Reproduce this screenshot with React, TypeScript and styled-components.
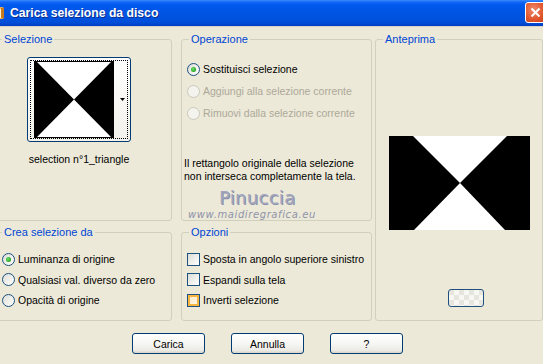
import React from "react";
import styled, { createGlobalStyle } from "styled-components";

const GlobalStyle = createGlobalStyle`
  html, body {
    margin: 0;
    padding: 0;
    background: #ece9d8;
  }
  body {
    font-family: "Liberation Sans", Arial, sans-serif;
    font-size: 10.5px;
    color: #000;
  }
`;

const Window = styled.div`
  width: 543px;
  height: 364px;
  overflow: hidden;
  background: #ece9d8;
`;

const TitleBar = styled.div`
  height: 26px;
  display: flex;
  align-items: center;
  background: linear-gradient(
    to bottom,
    #3d8cff 0px,
    #1468f6 2px,
    #0058ee 5px,
    #0054e3 50%,
    #004fda 85%,
    #003fc5 100%
  );
  border-bottom: 1px solid #d8d4c4;
`;

const TitleIcon = styled.svg`
  margin-left: -10px;
  margin-right: 4px;
  flex: none;
`;

const TitleText = styled.div`
  flex: 1;
  font-family: "Liberation Sans", Arial, sans-serif;
  font-weight: bold;
  font-size: 12.2px;
  color: #fff;
  text-shadow: 1px 1px 0 #0c2d8c;
`;

const CloseButton = styled.div`
  width: 21px;
  height: 21px;
  box-sizing: border-box;
  margin-right: -3px;
  margin-top: -2px;
  border: 1px solid #fff;
  border-radius: 3px;
  background: radial-gradient(circle at 40% 35%, #f08b6c 0%, #e2582f 55%, #c8421c 100%);
  display: flex;
  align-items: center;
  justify-content: center;
`;

const Body = styled.div`
  padding-top: 6px;
`;

const Panels = styled.div`
  display: flex;
  margin-left: -6px;
`;

const LeftGrid = styled.div`
  display: grid;
  grid-template-columns: 178px 191px;
  grid-template-rows: 188px 95px;
  column-gap: 9px;
  row-gap: 5px;
  margin-right: 3px;
`;

const Group = styled.fieldset<{ $w?: number; $h?: number }>`
  box-sizing: border-box;
  margin: 0;
  padding: 0;
  min-width: 0;
  width: ${(p) => (p.$w ? `${p.$w}px` : "auto")};
  height: ${(p) => (p.$h ? `${p.$h}px` : "auto")};
  border: 1px solid #d0d0bf;
  border-radius: 3px;
  display: flex;
  flex-direction: column;
`;

const Legend = styled.legend`
  margin-left: 7px;
  padding: 0 2px;
  font-size: 11px;
  line-height: 13px;
  color: #0046d5;
`;

const ThumbColumn = styled.div`
  width: 104px;
  margin: 11px 0 0 32px;
  display: flex;
  flex-direction: column;
  align-items: center;
`;

const Thumb = styled.div`
  box-sizing: border-box;
  width: 104px;
  height: 85px;
  border: 1px solid #003c74;
  border-radius: 3px;
  background: linear-gradient(to bottom, #ffffff, #f2f1ea);
  padding: 2px;
`;

const FocusRect = styled.div`
  box-sizing: border-box;
  height: 100%;
  border: 1px dotted #000;
  display: flex;
  align-items: center;
  padding: 1px 0 1px 3px;
`;

const ArrowSlot = styled.div`
  flex: 1;
  display: flex;
  align-items: center;
  justify-content: center;
  padding-left: 4px;
`;

const Caption = styled.div`
  margin-top: 11px;
  line-height: 13px;
  white-space: nowrap;
`;

const OptionList = styled.div<{ $top: number; $left: number; $row: number }>`
  margin-top: ${(p) => p.$top}px;
  padding-left: ${(p) => p.$left}px;
  display: flex;
  flex-direction: column;
  & > * {
    height: ${(p) => p.$row}px;
  }
`;

const Option = styled.label<{ $disabled?: boolean }>`
  display: flex;
  align-items: center;
  gap: 3px;
  white-space: nowrap;
  color: ${(p) => (p.$disabled ? "#aca899" : "#000")};
`;

const RadioMark = styled.span<{ $checked?: boolean; $disabled?: boolean }>`
  box-sizing: border-box;
  width: 13px;
  height: 13px;
  flex: none;
  border-radius: 50%;
  border: 1px solid ${(p) => (p.$disabled ? "#cac8bb" : "#1c5180")};
  background: ${(p) =>
    p.$disabled
      ? "#f4f3ee"
      : "linear-gradient(135deg, #dcdcd7 0%, #f2f2ee 60%, #ffffff 100%)"};
  display: flex;
  align-items: center;
  justify-content: center;
  &::after {
    content: "";
    display: ${(p) => (p.$checked ? "block" : "none")};
    width: 5px;
    height: 5px;
    border-radius: 50%;
    background: radial-gradient(circle at 40% 40%, #6ee26a 0%, #2fae2b 60%, #1f8f1c 100%);
  }
`;

const CheckMark = styled.span<{ $hover?: boolean }>`
  box-sizing: border-box;
  width: 13px;
  height: 13px;
  flex: none;
  border: 1px solid #1c5180;
  background: ${(p) =>
    p.$hover
      ? "linear-gradient(135deg, #fbe7c0, #fffaf0)"
      : "linear-gradient(135deg, #dcdcd7 0%, #f2f2ee 60%, #ffffff 100%)"};
  box-shadow: ${(p) => (p.$hover ? "inset 0 0 0 2px #f8b640" : "none")};
`;

const Note = styled.div`
  margin-top: 33px;
  padding-left: 2px;
  line-height: 12.5px;
`;

const Watermark = styled.div`
  margin-top: 6px;
  display: flex;
  flex-direction: column;
`;

const WatermarkName = styled.div`
  margin-left: 37px;
  font-family: "DejaVu Sans", Verdana, sans-serif;
  font-size: 18px;
  line-height: 20px;
  letter-spacing: 0.3px;
  color: #a1a5bd;
  text-shadow: 1px 1px 0 #8a8ea8;
`;

const WatermarkSite = styled.div`
  margin-left: 6px;
  font-family: "DejaVu Sans", Verdana, sans-serif;
  font-style: italic;
  font-size: 10px;
  line-height: 13px;
  letter-spacing: 0.6px;
  color: #8f93a9;
`;

const Preview = styled.svg`
  display: block;
  margin: 90px auto 0;
`;

const SmallButton = styled.div`
  box-sizing: border-box;
  width: 36px;
  height: 18px;
  margin: 59px 0 0 72px;
  border: 1px solid #1f4f7f;
  border-radius: 3px;
  background: repeating-conic-gradient(#f7f7f3 0 25%, #e6e6df 0 50%) 0 0 / 10px 10px;
`;

const ButtonRow = styled.div`
  display: flex;
  gap: 26px;
  padding-left: 132px;
  margin-top: 12px;
`;

const PushButton = styled.button`
  box-sizing: border-box;
  width: 73px;
  height: 21px;
  padding: 0;
  border: 1px solid #003c74;
  border-radius: 3px;
  background: linear-gradient(to bottom, #ffffff 0%, #f6f6f3 50%, #ecebe6 85%, #d8d4c8 100%);
  font-family: "Liberation Sans", Arial, sans-serif;
  font-size: 10.5px;
  color: #000;
`;

const Hourglass = ({ w, h, inset }: { w: number; h: number; inset: number }) => (
  <>
    <rect x="0" y="0" width={w} height={h} fill="#000" />
    <polygon points={`${inset},1 ${w - inset},1 ${w / 2},${h / 2}`} fill="#fff" />
    <polygon points={`${inset},${h - 1} ${w - inset},${h - 1} ${w / 2},${h / 2}`} fill="#fff" />
  </>
);

export default function App() {
  return (
    <Window>
      <GlobalStyle />
      <TitleBar>
        <TitleIcon width="16" height="16" viewBox="0 0 16 16">
          <rect x="2" y="2" width="12" height="12" rx="2" fill="#f0b050" />
          <rect x="5" y="4" width="9" height="9" fill="#fff4d8" />
          <rect x="11" y="3" width="3" height="10" fill="#c97a1c" />
        </TitleIcon>
        <TitleText>Carica selezione da disco</TitleText>
        <CloseButton>
          <svg width="11" height="11" viewBox="0 0 11 11">
            <path d="M1.5 1.5 L9.5 9.5 M9.5 1.5 L1.5 9.5" stroke="#fff" strokeWidth="2" />
          </svg>
        </CloseButton>
      </TitleBar>
      <Body>
        <Panels>
          <LeftGrid>
            <Group>
              <Legend>Selezione</Legend>
              <ThumbColumn>
                <Thumb>
                  <FocusRect>
                    <svg width="80" height="77" viewBox="0 0 80 77">
                      <Hourglass w={80} h={77} inset={3} />
                    </svg>
                    <ArrowSlot>
                      <svg width="5" height="3" viewBox="0 0 5 3">
                        <polygon points="0,0 5,0 2.5,3" fill="#000" />
                      </svg>
                    </ArrowSlot>
                  </FocusRect>
                </Thumb>
                <Caption>selection n°1_triangle</Caption>
              </ThumbColumn>
            </Group>
            <Group>
              <Legend>Operazione</Legend>
              <OptionList $top={12} $left={5} $row={22}>
                <Option>
                  <RadioMark $checked />
                  Sostituisci selezione
                </Option>
                <Option $disabled>
                  <RadioMark $disabled />
                  Aggiungi alla selezione corrente
                </Option>
                <Option $disabled>
                  <RadioMark $disabled />
                  Rimuovi dalla selezione corrente
                </Option>
              </OptionList>
              <Note>
                Il rettangolo originale della selezione
                <br />
                non interseca completamente la tela.
              </Note>
              <Watermark>
                <WatermarkName>Pinuccia</WatermarkName>
                <WatermarkSite>www.maidiregrafica.eu</WatermarkSite>
              </Watermark>
            </Group>
            <Group>
              <Legend>Crea selezione da</Legend>
              <OptionList $top={10} $left={7} $row={20.5}>
                <Option>
                  <RadioMark $checked />
                  Luminanza di origine
                </Option>
                <Option>
                  <RadioMark />
                  Qualsiasi val. diverso da zero
                </Option>
                <Option>
                  <RadioMark />
                  Opacità di origine
                </Option>
              </OptionList>
            </Group>
            <Group>
              <Legend>Opzioni</Legend>
              <OptionList $top={10} $left={5} $row={20.5}>
                <Option>
                  <CheckMark />
                  Sposta in angolo superiore sinistro
                </Option>
                <Option>
                  <CheckMark />
                  Espandi sulla tela
                </Option>
                <Option>
                  <CheckMark $hover />
                  Inverti selezione
                </Option>
              </OptionList>
            </Group>
          </LeftGrid>
          <Group $w={168} $h={288}>
            <Legend>Anteprima</Legend>
            <Preview width="141" height="94" viewBox="0 0 141 94">
              <rect x="0" y="0" width="141" height="94" fill="#000" />
              <polygon points="24,0 118,0 71,47" fill="#fff" />
              <polygon points="25,94 116,94 71,47" fill="#fff" />
            </Preview>
            <SmallButton />
          </Group>
        </Panels>
        <ButtonRow>
          <PushButton>Carica</PushButton>
          <PushButton>Annulla</PushButton>
          <PushButton>?</PushButton>
        </ButtonRow>
      </Body>
    </Window>
  );
}
